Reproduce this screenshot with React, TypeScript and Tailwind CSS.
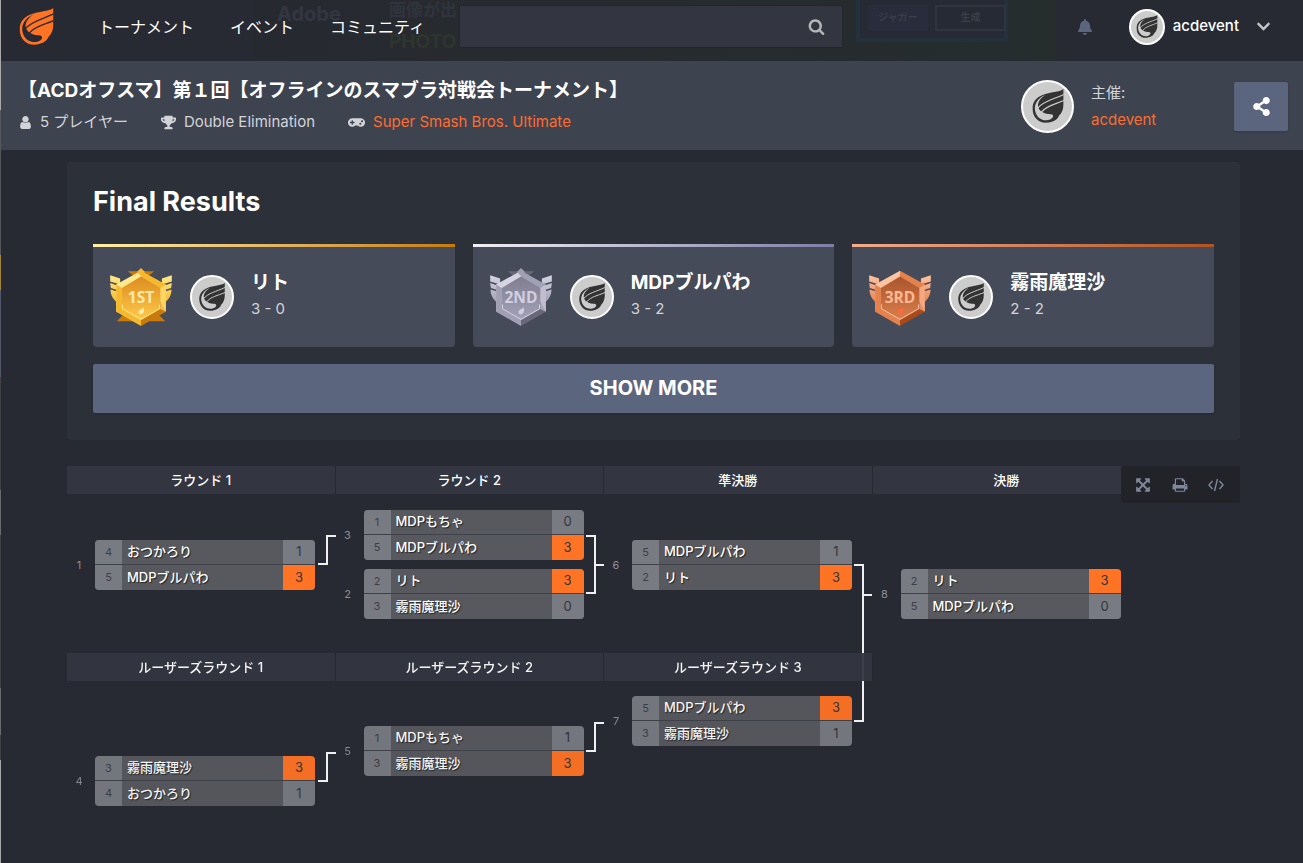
import { useId } from 'react'
import { FaBell, FaChevronDown, FaGamepad, FaShareAlt, FaTrophy } from 'react-icons/fa'

type Tone = 'gold' | 'silver' | 'bronze'

type Entry = { seed: number; name: string; score: number; won?: boolean }
type Match = { id: number; gap: string; entries: Entry[] }
type Round = { title: string; matches: Match[] }

const navLinks = ['トーナメント', 'イベント', 'コミュニティ']

const results: { name: string; record: string; tone: Tone; bar: string }[] = [
  { name: 'リト', record: '3 - 0', tone: 'gold', bar: 'from-[#fff0a5] to-[#c67c00]' },
  { name: 'MDPブルパわ', record: '3 - 2', tone: 'silver', bar: 'from-[#f1f0f4] to-[#7f7da8]' },
  { name: '霧雨魔理沙', record: '2 - 2', tone: 'bronze', bar: 'from-[#f3ab8b] to-[#b2531f]' },
]

const winners: Round[] = [
  {
    title: 'ラウンド 1',
    matches: [{ id: 1, gap: 'mt-[46px]', entries: [{ seed: 4, name: 'おつかろり', score: 1 }, { seed: 5, name: 'MDPブルパわ', score: 3, won: true }] }],
  },
  {
    title: 'ラウンド 2',
    matches: [
      { id: 3, gap: 'mt-4', entries: [{ seed: 1, name: 'MDPもちゃ', score: 0 }, { seed: 5, name: 'MDPブルパわ', score: 3, won: true }] },
      { id: 2, gap: 'mt-[9px]', entries: [{ seed: 2, name: 'リト', score: 3, won: true }, { seed: 3, name: '霧雨魔理沙', score: 0 }] },
    ],
  },
  {
    title: '準決勝',
    matches: [{ id: 6, gap: 'mt-[46px]', entries: [{ seed: 5, name: 'MDPブルパわ', score: 1 }, { seed: 2, name: 'リト', score: 3, won: true }] }],
  },
  {
    title: '決勝',
    matches: [{ id: 8, gap: 'mt-[75px]', entries: [{ seed: 2, name: 'リト', score: 3, won: true }, { seed: 5, name: 'MDPブルパわ', score: 0 }] }],
  },
]

const losers: Round[] = [
  {
    title: 'ルーザーズラウンド 1',
    matches: [{ id: 4, gap: 'mt-[75px]', entries: [{ seed: 3, name: '霧雨魔理沙', score: 3, won: true }, { seed: 4, name: 'おつかろり', score: 1 }] }],
  },
  {
    title: 'ルーザーズラウンド 2',
    matches: [{ id: 5, gap: 'mt-[45px]', entries: [{ seed: 1, name: 'MDPもちゃ', score: 1 }, { seed: 3, name: '霧雨魔理沙', score: 3, won: true }] }],
  },
  {
    title: 'ルーザーズラウンド 3',
    matches: [{ id: 7, gap: 'mt-[15px]', entries: [{ seed: 5, name: 'MDPブルパわ', score: 3, won: true }, { seed: 3, name: '霧雨魔理沙', score: 1 }] }],
  },
]

const glyphs = {
  search: 'M1216 832q0-185-131.5-316.5t-316.5-131.5-316.5 131.5-131.5 316.5 131.5 316.5 316.5 131.5 316.5-131.5 131.5-316.5zm512 832q0 52-38 90t-90 38q-54 0-90-38l-343-342q-179 124-399 124-143 0-273.5-55.5t-225-150-150-225-55.5-273.5 55.5-273.5 150-225 225-150 273.5-55.5 273.5 55.5 225 150 150 225 55.5 273.5q0 220-124 399l343 343q37 37 37 90z',
  user: 'M1536 1399q0 109-62.5 187t-150.5 78h-854q-88 0-150.5-78t-62.5-187q0-85 8.5-160.5t31.5-152 58.5-131 94-89 134.5-34.5q131 128 313 128t313-128q76 0 134.5 34.5t94 89 58.5 131 31.5 152 8.5 160.5zm-256-887q0 159-112.5 271.5t-271.5 112.5-271.5-112.5-112.5-271.5 112.5-271.5 271.5-112.5 271.5 112.5 112.5 271.5z',
  expand: 'M1411 541l-355 355 355 355 144-144q29-31 70-14 39 17 39 59v448q0 26-19 45t-45 19h-448q-42 0-59-40-17-39 14-69l144-144-355-355-355 355 144 144q31 30 14 69-17 40-59 40h-448q-26 0-45-19t-19-45v-448q0-42 40-59 39-17 69 14l144 144 355-355-355-355-144 144q-19 19-45 19-12 0-24-5-40-17-40-59v-448q0-26 19-45t45-19h448q42 0 59 40 17 39-14 69l-144 144 355 355 355-355-144-144q-31-30-14-69 17-40 59-40h448q26 0 45 19t19 45v448q0 42-39 59-13 5-25 5-26 0-45-19z',
  print: 'M448 1536h896v-256h-896v256zm0-640h896v-384h-160q-40 0-68-28t-28-68v-160h-640v640zm1152 64q0-26-19-45t-45-19-45 19-19 45 19 45 45 19 45-19 19-45zm128 0v416q0 13-9.5 22.5t-22.5 9.5h-224v160q0 40-28 68t-68 28h-960q-40 0-68-28t-28-68v-160h-224q-13 0-22.5-9.5t-9.5-22.5v-416q0-79 56.5-135.5t135.5-56.5h64v-544q0-40 28-68t68-28h672q40 0 88 20t76 48l152 152q28 28 48 76t20 88v256h64q79 0 135.5 56.5t56.5 135.5z',
}

function Glyph({ name, className }: { name: keyof typeof glyphs; className: string }) {
  return (
    <svg viewBox="0 0 1792 1792" fill="currentColor" className={`shrink-0 ${className}`} aria-hidden="true">
      <path d={glyphs[name]} />
    </svg>
  )
}

function Logo({ className }: { className: string }) {
  const id = useId()
  return (
    <svg viewBox="0 0 104 112" className={className} aria-hidden="true">
      <mask id={id}>
        <rect width="104" height="112" fill="#fff" />
        <path d="M42 20C19 31 7 48 9 68C12 91 28 103 47 103C60 103 72 94 68 86C62 80 50 85 39 79C28 74 22 68 20 60C16 46 26 32 42 20Z" fill="#000" />
        <path d="M18 63C36 40 70 34 104 18M30 76C48 54 74 51 104 38" fill="none" stroke="#000" strokeWidth="4" />
      </mask>
      <path mask={`url(#${id})`} fill="currentColor" d="M103 0V50C103 66 98 78 88 88C84 101 66 111 45 111C20 111 1 92 1 64C1 42 15 27 34 20C58 9 90 11 103 0Z" />
    </svg>
  )
}

function Avatar({ className, mark }: { className: string; mark: string }) {
  return (
    <span className={`flex shrink-0 items-center justify-center rounded-full border-2 border-white bg-[#cccccc] text-[#333333] ${className}`}>
      <Logo className={mark} />
    </span>
  )
}

const medals = {
  gold: { label: '1ST', light: '#ffe98a', mid: '#f4b92f', dark: '#c87b0c', face: '#dd8c20', face2: '#ffca4b', text: '#ffe9a8', shade: '#b96d10' },
  silver: { label: '2ND', light: '#d5d4e2', mid: '#a19fb3', dark: '#6a6878', face: '#807d90', face2: '#a3a2b8', text: '#d0cfe2', shade: '#64627a' },
  bronze: { label: '3RD', light: '#ffc3a2', mid: '#e5814d', dark: '#a8491c', face: '#a9552c', face2: '#d97f4e', text: '#ffb892', shade: '#8f4017' },
}

function Medal({ tone }: { tone: Tone }) {
  const id = useId()
  const m = medals[tone]
  return (
    <svg viewBox="0 0 186 178" className="h-[59px] w-[62px] shrink-0" role="img" aria-label={m.label}>
      <defs>
        <linearGradient id={`${id}w`} x1="0" y1="0" x2="0" y2="1">
          <stop offset="0" stopColor={m.light} />
          <stop offset="1" stopColor={m.mid} />
        </linearGradient>
        <linearGradient id={`${id}f`} x1="0" y1="0" x2="0" y2="1">
          <stop offset="0" stopColor={m.face} />
          <stop offset="1" stopColor={m.face2} />
        </linearGradient>
      </defs>
      <g fill={`url(#${id}w)`}>
        <path d="M0 22L30 32V50L0 41ZM0 45L26 54V68L2 60ZM1 65L24 72V108C8 94 1 82 1 65Z" />
        <path d="M186 22L156 32V50L186 41ZM186 45L160 54V68L184 60ZM185 65L162 72V108C178 94 185 82 185 65Z" />
      </g>
      {tone !== 'bronze' && <path d="M53 10H133L118 22H68Z" fill={m.dark} />}
      {tone === 'gold' && <path d="M20 161L42 138H144L166 161Z" fill={m.dark} />}
      <path d="M93 8L18 50V132L93 90Z" fill={m.light} />
      <path d="M93 8L168 50V132L93 90Z" fill={m.mid} />
      <path d="M18 132L93 175V90L35 100Z" fill={m.mid} />
      <path d="M168 132L93 175V90L151 100Z" fill={m.dark} />
      <path d="M18 50L35 60V124L18 132Z" fill={m.mid} />
      <path d="M168 50L151 60V124L168 132Z" fill={m.light} opacity=".6" />
      <path d="M93 26L151 60V124L93 157L35 124V60Z" fill={`url(#${id}f)`} />
      <path d="M37 110V123L93 155L149 123V110" fill="none" stroke={m.light} strokeWidth="3" />
      {tone !== 'bronze' && <path d="M93 0L105 12L93 24L81 12Z" fill={m.mid} />}
      <text x="93" y="107" textAnchor="middle" fontSize="47" fontWeight="700" fontFamily="'Open Sans', sans-serif" fill={m.text}>{m.label}</text>
      <path d="M102 119V130C101 136 97 140 92 140C86 140 84 135 86 130C90 123 98 123 102 119Z" fill={tone === 'bronze' ? '#ff6a3a' : m.text} />
    </svg>
  )
}

function BannerGhost() {
  return (
    <div aria-hidden="true" className="pointer-events-none absolute inset-0 overflow-hidden font-bold select-none">
      <div className="absolute top-0 left-[252px] h-full w-[802px] bg-linear-to-r from-[#272931] via-[#272b2e] to-[#252d2d]" />
      <span className="absolute top-1 left-[276px] text-[20px] leading-5 text-[#333641]">Adobe</span>
      <span className="absolute top-0.5 left-[388px] text-[17px] leading-4 text-[#30343d]">画像が出</span>
      <span className="absolute top-8 left-[388px] text-[19px] leading-5 text-[#2e352d]">PHOTO</span>
      <div className="absolute -top-1 left-[855px] h-[46px] w-[152px] border-4 border-[#24313c] bg-[#262a35]" />
      <span className="absolute top-[5px] left-[867px] h-[26px] w-[60px] bg-[#292c3a] text-center text-[10px] leading-6 text-[#3a3e49]">ジャガー</span>
      <span className="absolute top-[5px] left-[934px] h-[26px] w-[71px] border-2 border-[#30343e] text-center text-[10px] leading-5 text-[#3a3e49]">生成</span>
    </div>
  )
}

function MatchCard({ match }: { match: Match }) {
  return (
    <div className={`flex h-[50px] items-center ${match.gap}`}>
      <span className="w-[28px] pr-1 text-center text-[11px] text-[#8d8f95]">{match.id}</span>
      <div className="h-[50px] w-[220px] divide-y divide-[#404249] overflow-hidden rounded-sm">
        {match.entries.map((e) => (
          <div key={e.seed} className="flex h-[25px] items-stretch bg-[#58595e]">
            <span className="flex w-[27px] items-center justify-center bg-[#797b82] text-[11px] text-[#3c3f48]">{e.seed}</span>
            <span className="flex flex-1 items-center pl-[5px] text-[13px] font-medium text-white [text-shadow:1px_1px_1px_#222]">{e.name}</span>
            <span className={`flex w-8 items-center justify-center text-[13px] text-[#33353c] ${e.won ? 'bg-[#ff7324]' : 'bg-[#797b82]'}`}>{e.score}</span>
          </div>
        ))}
      </div>
    </div>
  )
}

function Rounds({ rounds }: { rounds: Round[] }) {
  return (
    <div className="grid w-[1074px] grid-cols-4">
      {rounds.map((round) => (
        <section key={round.title}>
          <h3 className="h-7 border-r border-[#262932] bg-[#333641] text-center text-[13px] leading-7 font-medium text-white">{round.title}</h3>
          {round.matches.map((match) => <MatchCard key={match.id} match={match} />)}
        </section>
      ))}
    </div>
  )
}

export default function App() {
  return (
    <div className="flex min-h-screen overflow-x-hidden bg-[#272a33] font-['Inter','Noto_Sans_CJK_JP',sans-serif] text-white">
      <div className="w-px shrink-0 bg-[linear-gradient(#a9a9a9_110px,#55575c_110px,#55575c_255px,#a5853a_255px,#a5853a_290px,#53576a_290px,#53576a_377px,#404246_377px,#404246_490px,#696b6f_490px,#696b6f_535px,#404246_535px,#404246_688px,#696b6f_688px,#696b6f_735px,#404246_735px,#404246_760px,#a5a5a5_760px)]" />
      <div className="min-w-0 flex-1">
        <header className="relative h-[61px]">
          <BannerGhost />
          <div className="relative flex h-full items-center pr-8 pb-2 pl-[18px]">
            <a href="#home" aria-label="ホーム" className="text-[#ff7324]"><Logo className="h-[37px] w-[35px]" /></a>
            <nav className="ml-[44px] flex w-[361px] shrink-0 gap-9">
              {navLinks.map((link) => <a key={link} href="#nav" className="text-base whitespace-nowrap text-white">{link}</a>)}
            </nav>
            <div className="relative h-[43px] w-[384px]">
              <input type="search" aria-label="検索" className="h-full w-full rounded-xs border border-[#23262f] bg-[#333640] px-3 text-sm" />
              <Glyph name="search" className="absolute top-[13px] right-[18px] h-[17px] w-[17px] text-[#b5b6ba]" />
            </div>
            <button type="button" aria-label="通知" className="mr-9 ml-auto text-[#5b657d]"><FaBell size={16} /></button>
            <button type="button" className="flex items-center">
              <Avatar className="h-9 w-9" mark="h-[23px] w-[22px]" />
              <span className="mr-[17px] ml-2 text-[15px] font-medium">acdevent</span>
              <FaChevronDown size={15} className="text-[#c4c5c8]" />
            </button>
          </div>
        </header>

        <div className="flex h-[89px] items-center bg-[#3e4350] pt-px pr-[15px] pl-[17px]">
          <div className="min-w-0 flex-1">
            <h1 className="text-[19px] leading-8 font-bold">【ACDオフスマ】第１回【オフラインのスマブラ対戦会トーナメント】</h1>
            <ul className="flex gap-[33px] text-[15px] leading-[30px] text-[#d3d4d8]">
              <li className="flex items-center gap-[7px]"><Glyph name="user" className="h-[15px] w-[15px]" />5 プレイヤー</li>
              <li className="flex items-center gap-2"><FaTrophy size={15} />Double Elimination</li>
              <li className="flex items-center gap-2"><FaGamepad size={17} /><a href="#game" className="text-[#ff6c2f]">Super Smash Bros. Ultimate</a></li>
            </ul>
          </div>
          <Avatar className="h-[53px] w-[53px]" mark="h-[34px] w-[32px]" />
          <div className="ml-[17px] w-[143px] text-[15px] leading-[27px]">
            <p className="text-[#d3d4d8]">主催:</p>
            <a href="#host" className="block text-[#ff6c2f]">acdevent</a>
          </div>
          <button type="button" aria-label="共有" className="flex h-[49px] w-[54px] items-center justify-center rounded-xs bg-[#5b657d] shadow-sm"><FaShareAlt size={19} /></button>
        </div>

        <main className="pt-3 pr-[63px] pl-[66px]">
          <section className="rounded-sm bg-[#2c3039] px-[26px] pt-5 pb-[27px]">
            <h2 className="text-[27px] leading-10 font-bold">Final Results</h2>
            <div className="mt-[22px] grid grid-cols-3 gap-[18px]">
              {results.map((r) => (
                <article key={r.tone} className="overflow-hidden rounded-b-sm bg-[#454b59]">
                  <div className={`h-[3px] bg-linear-to-r ${r.bar}`} />
                  <div className="flex h-[100px] items-center pl-[17px]">
                    <Medal tone={r.tone} />
                    <Avatar className="ml-[18px] h-[44px] w-[44px]" mark="h-[28px] w-[26px]" />
                    <div className="ml-[17px] pb-1">
                      <h3 className="text-[19px] leading-7 font-bold">{r.name}</h3>
                      <p className="text-[15px] leading-6 text-[#d3d4d8]">{r.record}</p>
                    </div>
                  </div>
                </article>
              ))}
            </div>
            <button type="button" className="mt-[17px] h-[49px] w-full rounded-xs bg-[#5b657d] pb-[2px] text-xl font-bold shadow-sm">SHOW MORE</button>
          </section>

          <section className="relative mt-[26px] pb-14">
            <Rounds rounds={winners} />
            <svg viewBox="0 0 810 320" className="pointer-events-none absolute top-0 left-0 h-[320px] w-[810px]" fill="none" stroke="#f0f0f0" strokeWidth="2" aria-hidden="true">
              <path d="M251 98H260V70H269M519 70H528V127H519M528 99H537M787 99H796V255H787M796 129H805M251 315H260V287H269M519 285H528V257H537" />
            </svg>
            <div className="relative mt-[34px] opacity-95"><Rounds rounds={losers} /></div>
            <div className="absolute top-0 right-0 flex h-[37px] w-[119px] items-center justify-between rounded-xs bg-[#212329] pr-4 pl-[14px] text-[#80879b]">
              <button type="button" aria-label="全画面"><Glyph name="expand" className="h-4 w-4" /></button>
              <button type="button" aria-label="印刷"><Glyph name="print" className="h-4 w-4" /></button>
              <button type="button" aria-label="埋め込み">
                <svg viewBox="0 0 16 14" className="h-[14px] w-4" fill="none" stroke="currentColor" strokeWidth="1.4" aria-hidden="true">
                  <path d="M4.5 3L1 7L4.5 11M11.5 3L15 7L11.5 11M9.5 1L6.5 13" />
                </svg>
              </button>
            </div>
          </section>
        </main>
      </div>
    </div>
  )
}
